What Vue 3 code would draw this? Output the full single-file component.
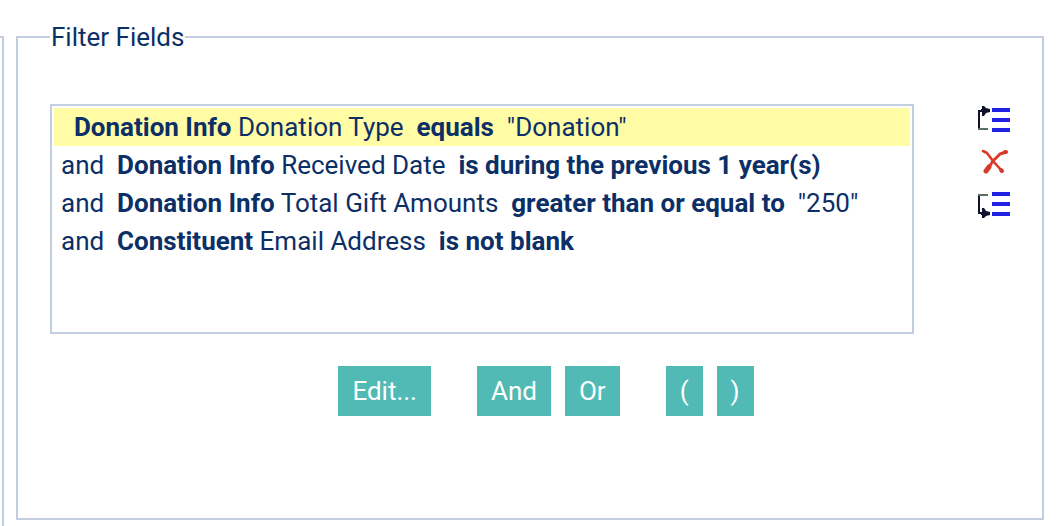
<template>
  <div class="page">
    <div class="side-panel"></div>

    <fieldset class="filter-fields">
      <legend>Filter Fields</legend>

      <div class="filter-body">
        <ul class="filter-list" role="listbox" aria-label="Filter Fields">
          <li
            v-for="(filter, index) in filters"
            :key="filter.id"
            role="option"
            class="filter-row"
            :class="{ selected: index === selected }"
            :aria-selected="index === selected"
            @click="selected = index"
          >{{ index > 0 ? filter.join : '' }}&nbsp; <b>{{ filter.group }}</b> {{ filter.field }}&nbsp; <b>{{ filter.operator }}</b><template v-if="filter.value">&nbsp; "{{ filter.value }}"</template></li>
        </ul>

        <div class="order-tools">
          <button type="button" class="icon-btn" aria-label="Move up" @click="move(-1)">
            <svg width="32" height="28" viewBox="0 0 32 28">
              <path d="M1 23V5h4" fill="none" stroke="#10122c" stroke-width="2" />
              <path d="M0 23h10" fill="none" stroke="#5a7064" stroke-width="2" />
              <path d="M4 0h2l2 2 4 1v3l-4 1-2 3H4V6H3V3h1z" fill="#10122c" />
              <path d="M14 4h18M14 14h18M14 24h18" stroke="#2020e4" stroke-width="4" />
            </svg>
          </button>
          <button type="button" class="icon-btn" aria-label="Remove" @click="remove">
            <svg width="32" height="28" viewBox="0 0 32 28">
              <g fill="none" stroke="#da3a2c" stroke-linecap="round" stroke-linejoin="round">
                <path d="M5 3l4 2 6 8 9 10" stroke-width="2.6" />
                <path d="M28 4l-6 2-7 7-4 6" stroke-width="3" />
                <path d="M28 4h-1M24 23l-1-1" stroke-width="4" />
                <path d="M11 19l-3 4" stroke-width="5" />
              </g>
            </svg>
          </button>
          <button type="button" class="icon-btn" aria-label="Move down" @click="move(1)">
            <svg width="32" height="28" viewBox="0 0 32 28">
              <path d="M1 5v18h4" fill="none" stroke="#10122c" stroke-width="2" />
              <path d="M0 5h10" fill="none" stroke="#5a7064" stroke-width="2" />
              <path d="M4 28h2l2-2 4-1v-3l-4-1-2-3H4v4H3v3h1z" fill="#10122c" />
              <path d="M14 4h18M14 14h18M14 24h18" stroke="#2020e4" stroke-width="4" />
            </svg>
          </button>
        </div>
      </div>

      <div class="actions">
        <div class="action-group">
          <button type="button" class="btn">Edit...</button>
        </div>
        <div class="action-group">
          <button type="button" class="btn" @click="setJoin('and')">And</button>
          <button type="button" class="btn" @click="setJoin('or')">Or</button>
        </div>
        <div class="action-group">
          <button type="button" class="btn">(</button>
          <button type="button" class="btn">)</button>
        </div>
      </div>
    </fieldset>
  </div>
</template>

<script setup>
import { ref } from 'vue'

const filters = ref([
  { id: 1, join: 'and', group: 'Donation Info', field: 'Donation Type', operator: 'equals', value: 'Donation' },
  { id: 2, join: 'and', group: 'Donation Info', field: 'Received Date', operator: 'is during the previous 1 year(s)' },
  { id: 3, join: 'and', group: 'Donation Info', field: 'Total Gift Amounts', operator: 'greater than or equal to', value: '250' },
  { id: 4, join: 'and', group: 'Constituent', field: 'Email Address', operator: 'is not blank' },
])

const selected = ref(0)

function move(step) {
  const target = selected.value + step
  if (target < 0 || target >= filters.value.length) return
  const [row] = filters.value.splice(selected.value, 1)
  filters.value.splice(target, 0, row)
  selected.value = target
}

function remove() {
  filters.value.splice(selected.value, 1)
  selected.value = Math.max(0, Math.min(selected.value, filters.value.length - 1))
}

function setJoin(join) {
  const row = filters.value[selected.value]
  if (row) row.join = join
}
</script>

<style>
body {
  margin: 0;
  background: #fff;
}
</style>

<style scoped>
.page {
  box-sizing: border-box;
  display: flex;
  gap: 12px;
  min-height: 100vh;
  padding: 22px 14px 0 0;
  font-family: Roboto, "Liberation Sans", sans-serif;
  font-size: 26px;
  line-height: 30px;
  color: #0c2f66;
}

/* right edge of the neighbouring panel */
.side-panel {
  box-sizing: border-box;
  flex: none;
  width: 4px;
  margin-top: 14px;
  border: 2px solid #c3cfe0;
  border-width: 2px 2px 0 0;
}

.filter-fields {
  flex: 1;
  align-self: flex-start;
  min-width: 0;
  margin: 0;
  padding: 52px 32px 102px;
  border: 2px solid #c3cfe0;
}

legend {
  padding: 0 1px;
}

.filter-body {
  display: flex;
  align-items: flex-start;
  gap: 64px;
}

.filter-list {
  box-sizing: border-box;
  flex: 1;
  min-width: 0;
  min-height: 230px;
  margin: 0;
  padding: 2px;
  border: 2px solid #c3cfe0;
  list-style: none;
}

.filter-row {
  padding: 4px 7px;
  cursor: pointer;
}

.filter-row.selected {
  background: #fffca5;
}

.order-tools {
  display: flex;
  flex-direction: column;
  gap: 14px;
  padding-top: 2px;
}

.icon-btn {
  display: block;
  padding: 0;
  border: 0;
  background: none;
  cursor: pointer;
}

.icon-btn svg {
  display: block;
}

.actions {
  display: flex;
  justify-content: center;
  gap: 46px;
  margin-top: 32px;
  padding-left: 32px;
}

.action-group {
  display: flex;
  gap: 14px;
}

.btn {
  padding: 10px 14px;
  border: 0;
  background: #51bab5;
  color: #fff;
  font: inherit;
  cursor: pointer;
}
</style>
